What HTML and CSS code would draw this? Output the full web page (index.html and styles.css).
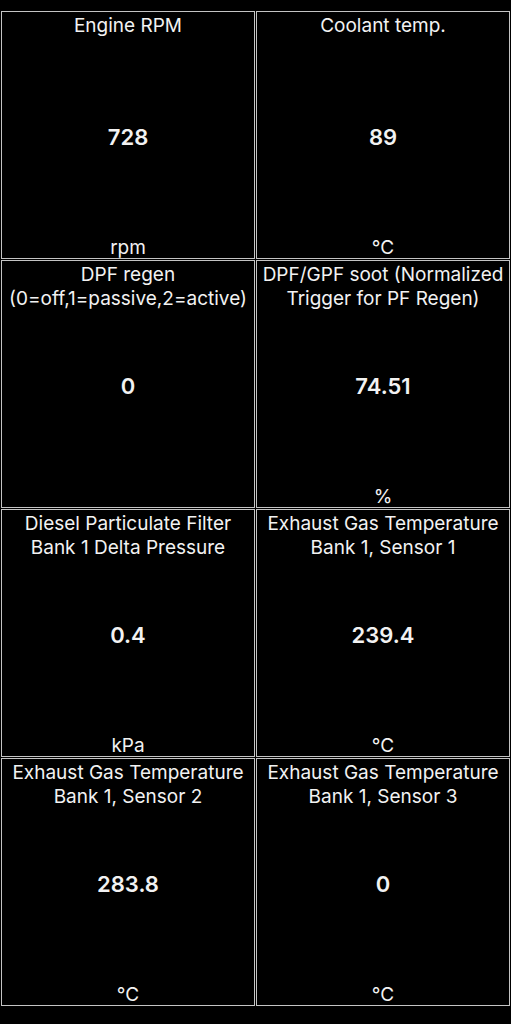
FILE: index.html
```html
<!DOCTYPE html>
<html>
<head>
<meta charset="utf-8">
<link rel="stylesheet" href="styles.css">
</head>
<body>
<div class="grid">
  <div class="cell"><div class="title">Engine RPM</div><div class="value">728</div><div class="unit">rpm</div></div>
  <div class="cell"><div class="title">Coolant temp.</div><div class="value">89</div><div class="unit">°C</div></div>
  <div class="cell"><div class="title">DPF regen<br>(0=off,1=passive,2=active)</div><div class="value">0</div><div class="unit"></div></div>
  <div class="cell"><div class="title">DPF/GPF soot (Normalized<br>Trigger for PF Regen)</div><div class="value">74.51</div><div class="unit">%</div></div>
  <div class="cell"><div class="title">Diesel Particulate Filter<br>Bank 1 Delta Pressure</div><div class="value">0.4</div><div class="unit">kPa</div></div>
  <div class="cell"><div class="title">Exhaust Gas Temperature<br>Bank 1, Sensor 1</div><div class="value">239.4</div><div class="unit">°C</div></div>
  <div class="cell"><div class="title">Exhaust Gas Temperature<br>Bank 1, Sensor 2</div><div class="value">283.8</div><div class="unit">°C</div></div>
  <div class="cell"><div class="title">Exhaust Gas Temperature<br>Bank 1, Sensor 3</div><div class="value">0</div><div class="unit">°C</div></div>
</div>
</body>
</html>
```
FILE: styles.css
```css
html, body {
  margin: 0;
  padding: 0;
  background: #000;
}
body {
  width: 511px;
  height: 1024px;
  overflow: hidden;
  font-family: Inter, "Liberation Sans", sans-serif;
  color: #f2f2f2;
}
.grid {
  display: grid;
  grid-template-columns: 254px 254px;
  grid-auto-rows: 248px;
  gap: 1px;
  padding: 11px 1px 0 1px;
}
.cell {
  border: 1px solid #c4c4c4;
  display: grid;
  grid-template-areas: "all";
  text-align: center;
  overflow: hidden;
}
.cell > div {
  grid-area: all;
}
.title {
  align-self: start;
  font-size: 19px;
  line-height: 24px;
  padding-top: 2px;
  white-space: nowrap;
}
.value {
  align-self: center;
  font-size: 22px;
  font-weight: 600;
  line-height: 24px;
  padding-top: 3px;
}
.unit {
  align-self: end;
  font-size: 19px;
  line-height: 20px;
  padding-bottom: 0;
}
```
